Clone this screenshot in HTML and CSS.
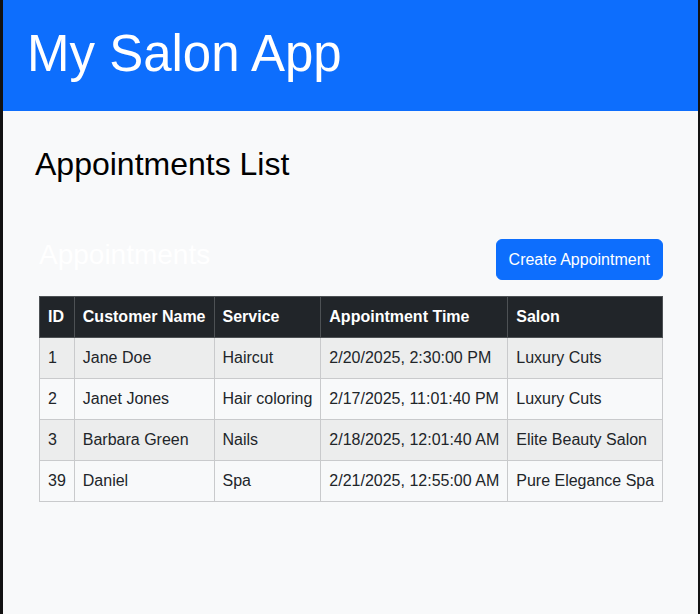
FILE: index.html
```html
<!DOCTYPE html>
<html lang="en">
<head>
<meta charset="utf-8">
<title>My Salon App</title>
<link rel="stylesheet" href="styles.css">
</head>
<body>
<div class="frame">
  <header class="app-header">
    <h1 class="app-title">My Salon App</h1>
  </header>
  <main class="page">
    <h2 class="page-title">Appointments List</h2>
    <section class="appointments">
      <div class="toolbar">
        <h3 class="section-title">Appointments</h3>
        <button class="btn-primary" type="button">Create Appointment</button>
      </div>
      <table class="data-table">
        <thead>
          <tr>
            <th>ID</th>
            <th>Customer Name</th>
            <th>Service</th>
            <th>Appointment Time</th>
            <th>Salon</th>
          </tr>
        </thead>
        <tbody>
          <tr>
            <td>1</td>
            <td>Jane Doe</td>
            <td>Haircut</td>
            <td>2/20/2025, 2:30:00 PM</td>
            <td>Luxury Cuts</td>
          </tr>
          <tr>
            <td>2</td>
            <td>Janet Jones</td>
            <td>Hair coloring</td>
            <td>2/17/2025, 11:01:40 PM</td>
            <td>Luxury Cuts</td>
          </tr>
          <tr>
            <td>3</td>
            <td>Barbara Green</td>
            <td>Nails</td>
            <td>2/18/2025, 12:01:40 AM</td>
            <td>Elite Beauty Salon</td>
          </tr>
          <tr>
            <td>39</td>
            <td>Daniel</td>
            <td>Spa</td>
            <td>2/21/2025, 12:55:00 AM</td>
            <td>Pure Elegance Spa</td>
          </tr>
        </tbody>
      </table>
    </section>
  </main>
</div>
</body>
</html>
```

FILE: styles.css
```css
html, body {
  margin: 0;
  padding: 0;
  height: 100%;
}

body {
  background: #121212;
  font-family: "Liberation Sans", Arial, sans-serif;
  color: #212529;
  font-size: 16px;
  line-height: 1.5;
}

.frame {
  margin: 0 2px 0 3px;
  min-height: 100%;
  background: #f8f9fa;
}

.app-header {
  background: #0d6efd;
  height: 111px;
  box-sizing: border-box;
  padding: 23px 0 0 24px;
}

.app-title {
  margin: 0;
  color: #fff;
  font-size: 51px;
  font-weight: 400;
  line-height: 1.2;
}

.page {
  padding: 34px 35px 0 32px;
}

.page-title {
  margin: 0;
  color: #000;
  font-size: 32px;
  font-weight: 400;
  line-height: 1.2;
}

.appointments {
  margin: 55px 0 0 4px;
}

.toolbar {
  display: flex;
  justify-content: space-between;
  align-items: flex-start;
  margin-bottom: 16px;
}

.section-title {
  margin: 0;
  color: #fff;
  font-size: 28px;
  font-weight: 400;
  line-height: 1.2;
}

.btn-primary {
  margin-top: 1px;
  font-family: inherit;
  font-size: 16px;
  line-height: 23px;
  padding: 8px 12px;
  border: 1px solid #0d6efd;
  border-radius: 6px;
  background: #0d6efd;
  color: #fff;
  cursor: pointer;
}

.data-table {
  width: 100%;
  border-collapse: collapse;
}

.data-table th,
.data-table td {
  text-align: left;
  padding: 8px;
  border: 1px solid #c9cacc;
  white-space: nowrap;
}

.data-table th {
  background: #212529;
  color: #fff;
  font-weight: 700;
  border-color: #4d5154;
}

.data-table tbody tr:nth-child(odd) td {
  background: #eceded;
}

.data-table tbody tr:nth-child(even) td {
  background: #f8f9fa;
}
```
